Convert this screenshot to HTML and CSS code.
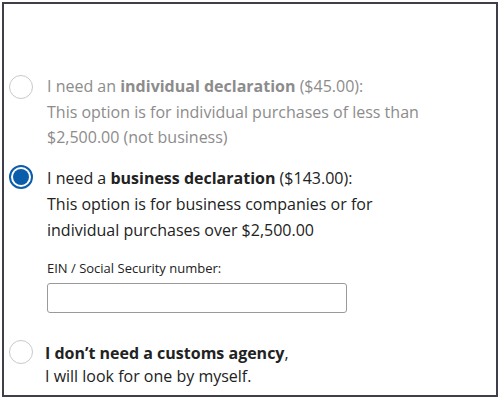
FILE: index.html
```html
<!DOCTYPE html>
<html lang="en">
<head>
    <meta charset="UTF-8">
    <meta name="viewport" content="width=device-width, initial-scale=1.0">
    <title>Customs declaration</title>
    <link rel="stylesheet" href="styles.css">
</head>
<body>
    <div class="frame">
        <!-- Option 1 : individual -->
        <div class="option option-disabled">
            <span class="radio"></span>
            <div class="option-text">
                <p>I need an <strong>individual declaration</strong> ($45.00):</p>
                <p>This option is for individual purchases of less than $2,500.00 (not business)</p>
            </div>
        </div>

        <!-- Option 2 : business (selected) -->
        <div class="option option-selected">
            <span class="radio checked"></span>
            <div class="option-text">
                <p>I need a <strong>business declaration</strong> ($143.00):</p>
                <p>This option is for business companies or for individual purchases over $2,500.00</p>
                <div class="field">
                    <label for="ein">EIN / Social Security number:</label>
                    <input type="text" id="ein">
                </div>
            </div>
        </div>

        <!-- Option 3 : no agency -->
        <div class="option option-none">
            <span class="radio"></span>
            <div class="option-text">
                <p><strong>I don’t need a customs agency</strong>,</p>
                <p>I will look for one by myself.</p>
            </div>
        </div>
    </div>
</body>
</html>
```

FILE: styles.css
```css
/* General Reset */
* {
    margin: 0;
    padding: 0;
    box-sizing: border-box;
}

body {
    font-family: 'Open Sans', 'Noto Sans', sans-serif;
    background-color: #fff;
    color: #222;
    padding: 2px;
}

.frame {
    width: 496px;
    height: 395px;
    border: 2px solid #3f3f4c;
    padding: 70px 0 0 5px;
    overflow: hidden;
}

.option {
    display: flex;
    gap: 14px;
}

.option-text {
    max-width: 400px;
}

.option p {
    font-size: 16px;
    line-height: 25.5px;
}

.radio {
    flex: none;
    width: 24px;
    height: 24px;
    margin-top: 1px;
    border: 1px solid #c9c9c9;
    border-radius: 50%;
    position: relative;
}

.radio.checked {
    margin-top: 0;
    border: 2px solid #0b5cab;
}

.radio.checked::after {
    content: "";
    position: absolute;
    top: 2px;
    left: 2px;
    width: 16px;
    height: 16px;
    border-radius: 50%;
    background: #0b5cab;
}

.option-disabled {
    color: #8c8c8c;
}

.option-selected {
    margin-top: 14px;
}

.option-selected p {
    line-height: 26px;
}

.field {
    margin-top: 15px;
}

.field label {
    display: block;
    font-size: 13px;
    line-height: 20px;
    margin-bottom: 5px;
}

.field input {
    width: 300px;
    height: 30px;
    border: 1px solid #9a9a9a;
    border-radius: 3px;
    font-family: inherit;
    font-size: 14px;
    padding: 0 8px;
}

.option-none {
    margin-top: 29px;
    gap: 12px;
}

.option-none .radio {
    margin-top: -2px;
}

.option-none p {
    line-height: 23px;
}
```
